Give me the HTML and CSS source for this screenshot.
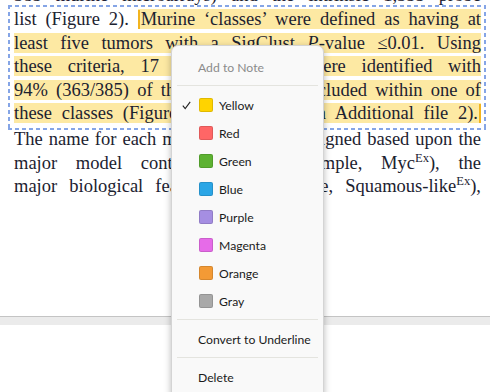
FILE: index.html
```html
<!DOCTYPE html>
<html lang="en">
<head>
    <meta charset="UTF-8">
    <title>Highlight menu</title>
    <link rel="stylesheet" href="styles.css">
</head>
<body>
    <div class="page">
        <div class="text">
            <div class="line">385 murine microarrays) and the intrinsic 1,355 probe</div>
            <div class="annot">
                <div class="line">list (Figure 2). <span class="hl"><span class="caret"></span>Murine ‘classes’ were defined as having at</span></div>
                <div class="line"><span class="hl">least five tumors with a SigClust <i>P</i>-value ≤0.01. Using</span></div>
                <div class="line"><span class="hl">these criteria, 17 murine classes were identified with</span></div>
                <div class="line"><span class="hl">94% (363/385) of the samples were included within one of</span></div>
                <div class="line"><span class="hl">these classes (Figure 2 and Table 1 in Additional file 2).<span class="caret end"></span></span></div>
                <div class="dashed"></div>
            </div>
            <div class="para">
                <div class="line">The name for each murine class was assigned based upon the</div>
                <div class="line">major model contributors (for example, Myc<sup>Ex</sup>), the</div>
                <div class="line">major biological features (for example, Squamous-like<sup>Ex</sup>),</div>
            </div>
        </div>
    </div>
    <div class="page next"></div>

    <div class="menu">
        <div class="item muted">Add to Note</div>
        <div class="sep"></div>
        <div class="item color">
            <span class="check"><svg width="9" height="9" viewBox="0 0 9 9"><polyline points="0.8,4.6 3.2,7.6 8.2,0.8" fill="none" stroke="#222" stroke-width="1.1"/></svg></span>
            <span class="swatch yellow"></span>Yellow
        </div>
        <div class="item color"><span class="check"></span><span class="swatch red"></span>Red</div>
        <div class="item color"><span class="check"></span><span class="swatch green"></span>Green</div>
        <div class="item color"><span class="check"></span><span class="swatch blue"></span>Blue</div>
        <div class="item color"><span class="check"></span><span class="swatch purple"></span>Purple</div>
        <div class="item color"><span class="check"></span><span class="swatch magenta"></span>Magenta</div>
        <div class="item color"><span class="check"></span><span class="swatch orange"></span>Orange</div>
        <div class="item color"><span class="check"></span><span class="swatch gray"></span>Gray</div>
        <div class="sep"></div>
        <div class="item">Convert to Underline</div>
        <div class="sep"></div>
        <div class="item">Delete</div>
    </div>
</body>
</html>
```

FILE: styles.css
```css
body {
    margin: 0;
    background: #ebebeb;
    overflow: hidden;
}
.page {
    background: white;
    height: 316px;
    overflow: hidden;
    border-bottom: 1px solid #c4c4c4;
}
.page.next {
    height: 80px;
    margin-top: 8px;
    border-bottom: none;
}
.text {
    margin-top: -15.6px;
    padding-left: 14px;
    width: 467px;
    font-family: "Liberation Serif", serif;
    font-size: 18.5px;
    line-height: 23.6px;
    color: #1c2230;
}
.line {
    text-align: justify;
    text-align-last: justify;
    white-space: nowrap;
}
.hl {
    background: #fde9a3;
}
.caret {
    display: inline-block;
    width: 0;
    height: 19px;
    vertical-align: -4px;
    border-left: 2px solid #f2b41f;
    margin-right: 1px;
}
.caret.end {
    margin-right: 0;
    margin-left: 1px;
}
.annot {
    position: relative;
}
.dashed {
    position: absolute;
    top: -3px;
    bottom: -4px;
    left: -6px;
    right: -5px;
    background:
        repeating-linear-gradient(90deg, #85a5e6 0 4px, transparent 4px 7px) top left / 100% 2px no-repeat,
        repeating-linear-gradient(90deg, #85a5e6 0 4px, transparent 4px 7px) bottom left / 100% 2px no-repeat,
        repeating-linear-gradient(180deg, #85a5e6 0 4px, transparent 4px 7px) top left / 2px 100% no-repeat,
        repeating-linear-gradient(180deg, #85a5e6 0 4px, transparent 4px 7px) top right / 2px 100% no-repeat;
}
.para {
    margin-top: 2px;
}
sup {
    font-size: 0.68em;
    line-height: 0;
    vertical-align: 0.55em;
}

/* context menu */
.menu {
    position: absolute;
    left: 171px;
    top: 45px;
    width: 151px;
    height: 360px;
    padding-top: 7px;
    background: #f9f9f9;
    border: 1px solid #d4d4d4;
    border-radius: 7px 7px 0 0;
    box-shadow: 0 2px 7px rgba(0,0,0,0.28);
    font-family: Lato, "Noto Sans", sans-serif;
    font-size: 12.2px;
    color: #1b1b1b;
}
.item {
    height: 28px;
    display: flex;
    align-items: center;
    padding-left: 26px;
}
.item.muted {
    color: #8b8b8b;
}
.item.color {
    padding-left: 10px;
}
.check {
    width: 17px;
    display: flex;
    align-items: center;
}
.swatch {
    width: 12px;
    height: 12px;
    border-radius: 2px;
    border: 1px solid rgba(0,0,0,0.12);
    margin-right: 6px;
}
.swatch.yellow { background: #ffd300; }
.swatch.red { background: #ff6666; }
.swatch.green { background: #5db232; }
.swatch.blue { background: #2ba6e6; }
.swatch.purple { background: #a58ee2; }
.swatch.magenta { background: #e66be8; }
.swatch.orange { background: #f39a35; }
.swatch.gray { background: #a9a9a9; }
.sep {
    height: 1px;
    margin: 4px 5px 5px;
    background: #e4e4df;
}
```
